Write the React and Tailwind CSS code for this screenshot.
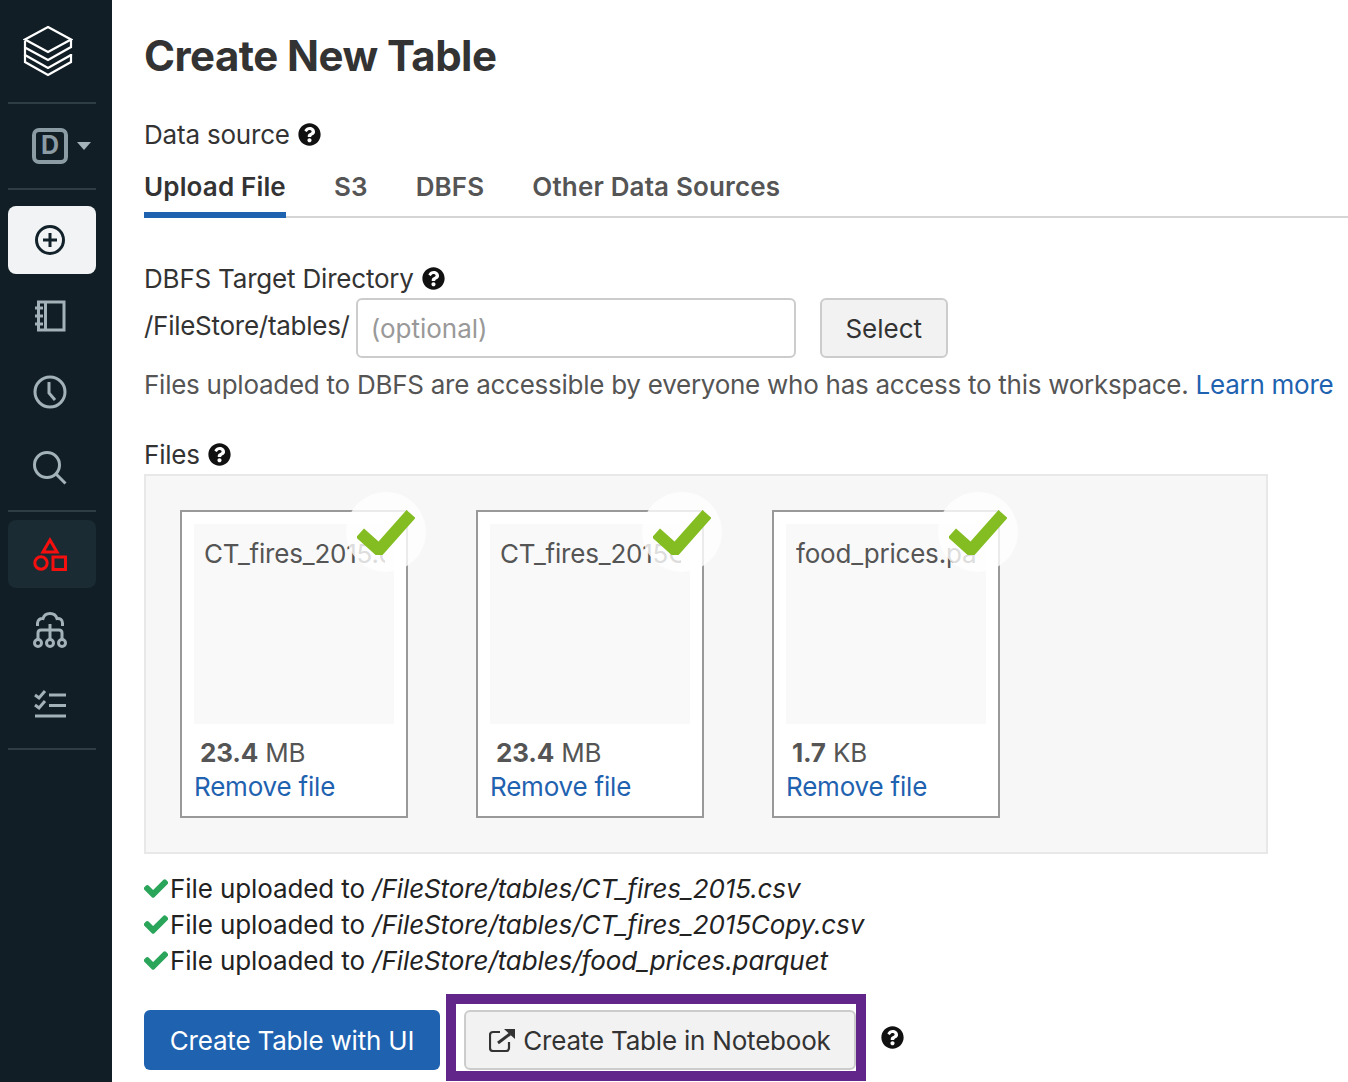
import { FaCheck, FaQuestionCircle } from "react-icons/fa";

const HelpIcon = ({ className = "" }) => (
  <FaQuestionCircle className={`text-[#111] ${className}`} size={23} />
);

const LogoIcon = () => (
  <svg width="50" height="52" viewBox="0 0 50 52" fill="none" stroke="#fff" strokeWidth="2.2">
    <path d="M25 2 L48 14.5 L25 27 L2 14.5 Z" />
    <path d="M48 14 V22 L25 35 L2 22.5 V16" />
    <path d="M2 22.5 V30 L25 43 L48 30 V29" />
    <path d="M2 30 V37 L25 50 L48 37 V29" />
  </svg>
);

const PlusIcon = () => (
  <svg width="32" height="32" viewBox="0 0 32 32" fill="none" stroke="#13222a" strokeWidth="3">
    <circle cx="16" cy="16" r="13.5" />
    <path d="M16 9 V23 M9 16 H23" />
  </svg>
);

const NotebookIcon = () => (
  <svg width="32" height="32" viewBox="0 0 32 32" fill="none" stroke="#a3b1b8" strokeWidth="3">
    <path d="M4.5 2 H30 V30 H4.5 Z M11.5 2 V30" />
    <path d="M1 8 H9 M1 16 H9 M1 24 H9" />
  </svg>
);

const ClockIcon = () => (
  <svg width="34" height="34" viewBox="0 0 34 34" fill="none" stroke="#a3b1b8" strokeWidth="3">
    <circle cx="17" cy="17" r="15" />
    <path d="M16 7 V18 L22 25" />
  </svg>
);

const SearchIcon = () => (
  <svg width="34" height="34" viewBox="0 0 34 34" fill="none" stroke="#a3b1b8" strokeWidth="3">
    <circle cx="14" cy="14" r="12.5" />
    <path d="M23 23 L32.5 32.5" />
  </svg>
);

const ShapesIcon = () => (
  <svg width="34" height="34" viewBox="0 0 34 34" fill="none" stroke="#f50f0f" strokeWidth="3">
    <path d="M17 3 L24 15 H10 Z" />
    <circle cx="8" cy="26" r="6.2" />
    <rect x="20" y="20" width="12.5" height="12.5" />
  </svg>
);

const NetworkIcon = () => (
  <svg width="34" height="36" viewBox="0 0 34 36" fill="none" stroke="#a3b1b8" strokeWidth="3">
    <path d="M4.5 14 V11 C4.5 8 7.5 6 10 6.5 C11 3 14 1.5 17 1.5 C20 1.5 23 3 24 6.5 C27 6 29.5 8 29.5 11 V14" />
    <path d="M17 12 V27 M5 27 V21 C5 19 6 18 8 18 H26 C28 18 29 19 29 21 V27" />
    <circle cx="5" cy="31" r="3.5" />
    <circle cx="17" cy="31" r="3.5" />
    <circle cx="29" cy="31" r="3.5" />
  </svg>
);

const TasksIcon = () => (
  <svg className="mb-1" width="32" height="30" viewBox="0 0 32 30" fill="none" stroke="#a3b1b8" strokeWidth="3">
    <path d="M1 6 L5 9 L11 2 M1 16 L5 19 L11 12" />
    <path d="M15 6 H32 M15 16.5 H32" />
    <path d="M1 27 H32" />
  </svg>
);

const ExternalIcon = () => (
  <svg width="26" height="23" viewBox="0 0 26 23" fill="none" stroke="#333" strokeWidth="2.2">
    <path d="M11 3 H4 C2 3 1 4 1 6 V19 C1 21 2 22 4 22 H17 C19 22 20 21 20 19 V13" />
    <path d="M9 14 L21 5" strokeWidth="3" />
    <path d="M15 0 H26 V10 Z" fill="#333" stroke="none" />
  </svg>
);

const Divider = () => <div className="mx-2 h-[2px] bg-[#2e3d44]" />;

const NavTile = ({ className = "", children }) => (
  <div className={`mx-2 flex h-[68px] items-center justify-center rounded-lg pr-1 ${className}`}>
    {children}
  </div>
);

const Sidebar = () => (
  <aside className="h-full w-[112px] shrink-0 bg-[#111e25]">
    <div className="flex h-full w-[104px] flex-col">
      <div className="flex h-[102px] items-center justify-center pr-2">
        <LogoIcon />
      </div>
      <Divider />
      <div className="flex h-[84px] items-center pl-8">
        <div className="flex h-9 w-9 items-center justify-center rounded-[7px] border-[4px] border-[#8b9ca4] text-[25px] font-bold text-[#8b9ca4]">
          D
        </div>
        <div className="ml-[9px] h-0 w-0 border-x-[7px] border-t-[8px] border-x-transparent border-t-[#a3b1b8]" />
      </div>
      <Divider />
      <div className="mt-4 flex flex-col gap-2">
        <NavTile className="bg-[#f2f3f5]">
          <PlusIcon />
        </NavTile>
        <NavTile>
          <NotebookIcon />
        </NavTile>
        <NavTile>
          <ClockIcon />
        </NavTile>
        <NavTile>
          <SearchIcon />
        </NavTile>
      </div>
      <div className="mb-2 mt-2">
        <Divider />
      </div>
      <div className="flex flex-col gap-2">
        <NavTile className="bg-[#1b2b33]">
          <ShapesIcon />
        </NavTile>
        <NavTile>
          <NetworkIcon />
        </NavTile>
        <NavTile>
          <TasksIcon />
        </NavTile>
      </div>
      <div className="mt-2">
        <Divider />
      </div>
    </div>
  </aside>
);

const FileCard = ({ name, size, unit }) => (
  <div className="relative h-[308px] w-[228px] border-2 border-[#999] bg-white">
    <div className="ml-3 mt-3 h-[200px] w-[200px] bg-[#f9f9f9] pl-[10px] pt-[10px] text-[#555]">
      <div className="w-[181px] overflow-hidden whitespace-nowrap">{name}</div>
    </div>
    <div className="ml-[18px] mt-[14px] leading-[30px] text-[#555]">
      <span className="font-bold">{size}</span> {unit}
    </div>
    <div className="ml-3 mt-[4px] leading-[30px] text-[#1f62b0]">Remove file</div>
    <div className="absolute left-[164px] top-[-20px] flex h-20 w-20 items-center justify-center rounded-full bg-white/80">
      <svg width="58" height="46" viewBox="0 0 58 46" fill="none">
        <path d="M3 24 L22 41 L54 5" stroke="#84bd22" strokeWidth="12" />
      </svg>
    </div>
  </div>
);

const UploadLine = ({ path }) => (
  <div className="flex h-9 items-center tracking-[-0.1px] text-[#222]">
    <FaCheck
      className="mr-[2px] w-[24px] text-[#2aa55a]"
      size={23}
      stroke="currentColor"
      strokeWidth={30}
    />
    <span>
      File uploaded to <em>{path}</em>
    </span>
  </div>
);

export default function App() {
  const tabs = ["S3", "DBFS", "Other Data Sources"];

  return (
    <div className="flex h-[1082px] w-[1348px] overflow-hidden bg-white font-['Inter',sans-serif] text-[26px] tracking-[-0.2px] text-[#333]">
      <Sidebar />
      <main className="min-w-0 flex-1 pl-8">
        <h1 className="mt-[27px] text-[42px] font-bold leading-[58px] tracking-[-0.55px] text-[#333]">
          Create New Table
        </h1>

        <div className="mt-[31px] flex h-9 items-center gap-2">
          Data source <HelpIcon />
        </div>

        {/* Tabs */}
        <div className="mt-[8px] flex h-[58px] border-b-2 border-[#d5d5d5] font-semibold tracking-[0.15px] text-[#555]">
          <div className="mb-[-2px] mr-12 flex h-[58px] items-center border-b-[6px] border-[#1f62b0] text-[#333]">
            Upload File
          </div>
          {tabs.map((tab) => (
            <div key={tab} className="mr-12 flex items-center pb-[3px]">
              {tab}
            </div>
          ))}
        </div>

        <div className="mt-[42px] flex h-9 items-center gap-2">
          DBFS Target Directory <HelpIcon />
        </div>
        <div className="mt-[2px] flex items-start">
          <span className="leading-[56px] tracking-[-0.27px]">/FileStore/tables/</span>
          <div className="ml-[6px] flex h-[60px] w-[440px] items-center rounded-md border-2 border-[#ccc] pl-[13px] tracking-normal text-[#999]">
            (optional)
          </div>
          <div className="ml-6 flex h-[60px] w-[128px] items-center justify-center rounded-md border-2 border-[#ccc] bg-[#f2f2f2] tracking-normal">
            Select
          </div>
        </div>
        <p className="mt-[9px] whitespace-nowrap leading-[36px] tracking-[-0.26px] text-[#555]">
          Files uploaded to DBFS are accessible by everyone who has access to this workspace.{" "}
          <span className="text-[#1f62b0]">Learn more</span>
        </p>

        <div className="mt-[33px] flex h-9 items-center gap-2">
          Files <HelpIcon />
        </div>
        <div className="mt-[2px] flex h-[380px] w-[1124px] gap-[68px] border-2 border-[#e8e8e8] bg-[#f7f7f7] pl-[34px] pt-[34px]">
          <FileCard name="CT_fires_2015.csv" size="23.4" unit="MB" />
          <FileCard name="CT_fires_2015Copy.csv" size="23.4" unit="MB" />
          <FileCard name="food_prices.parquet" size="1.7" unit="KB" />
        </div>

        <div className="mt-[16px]">
          <UploadLine path="/FileStore/tables/CT_fires_2015.csv" />
          <UploadLine path="/FileStore/tables/CT_fires_2015Copy.csv" />
          <UploadLine path="/FileStore/tables/food_prices.parquet" />
        </div>

        <div className="mt-[32px] flex items-start">
          <div className="flex h-[60px] w-[296px] items-center justify-center rounded-md bg-[#1f62b0] text-white">
            Create Table with UI
          </div>
          <div className="ml-[6px] mt-[-16px] h-[87px] w-[420px] border-[10px] border-[#62258a] pl-2 pt-[6px]">
            <div className="flex h-[60px] items-center justify-center gap-2 rounded-md border-2 border-[#ccc] bg-[#f2f2f2]">
              <ExternalIcon />
              Create Table in Notebook
            </div>
          </div>
          <HelpIcon className="ml-[15px] mt-[16px]" />
        </div>
      </main>
    </div>
  );
}
